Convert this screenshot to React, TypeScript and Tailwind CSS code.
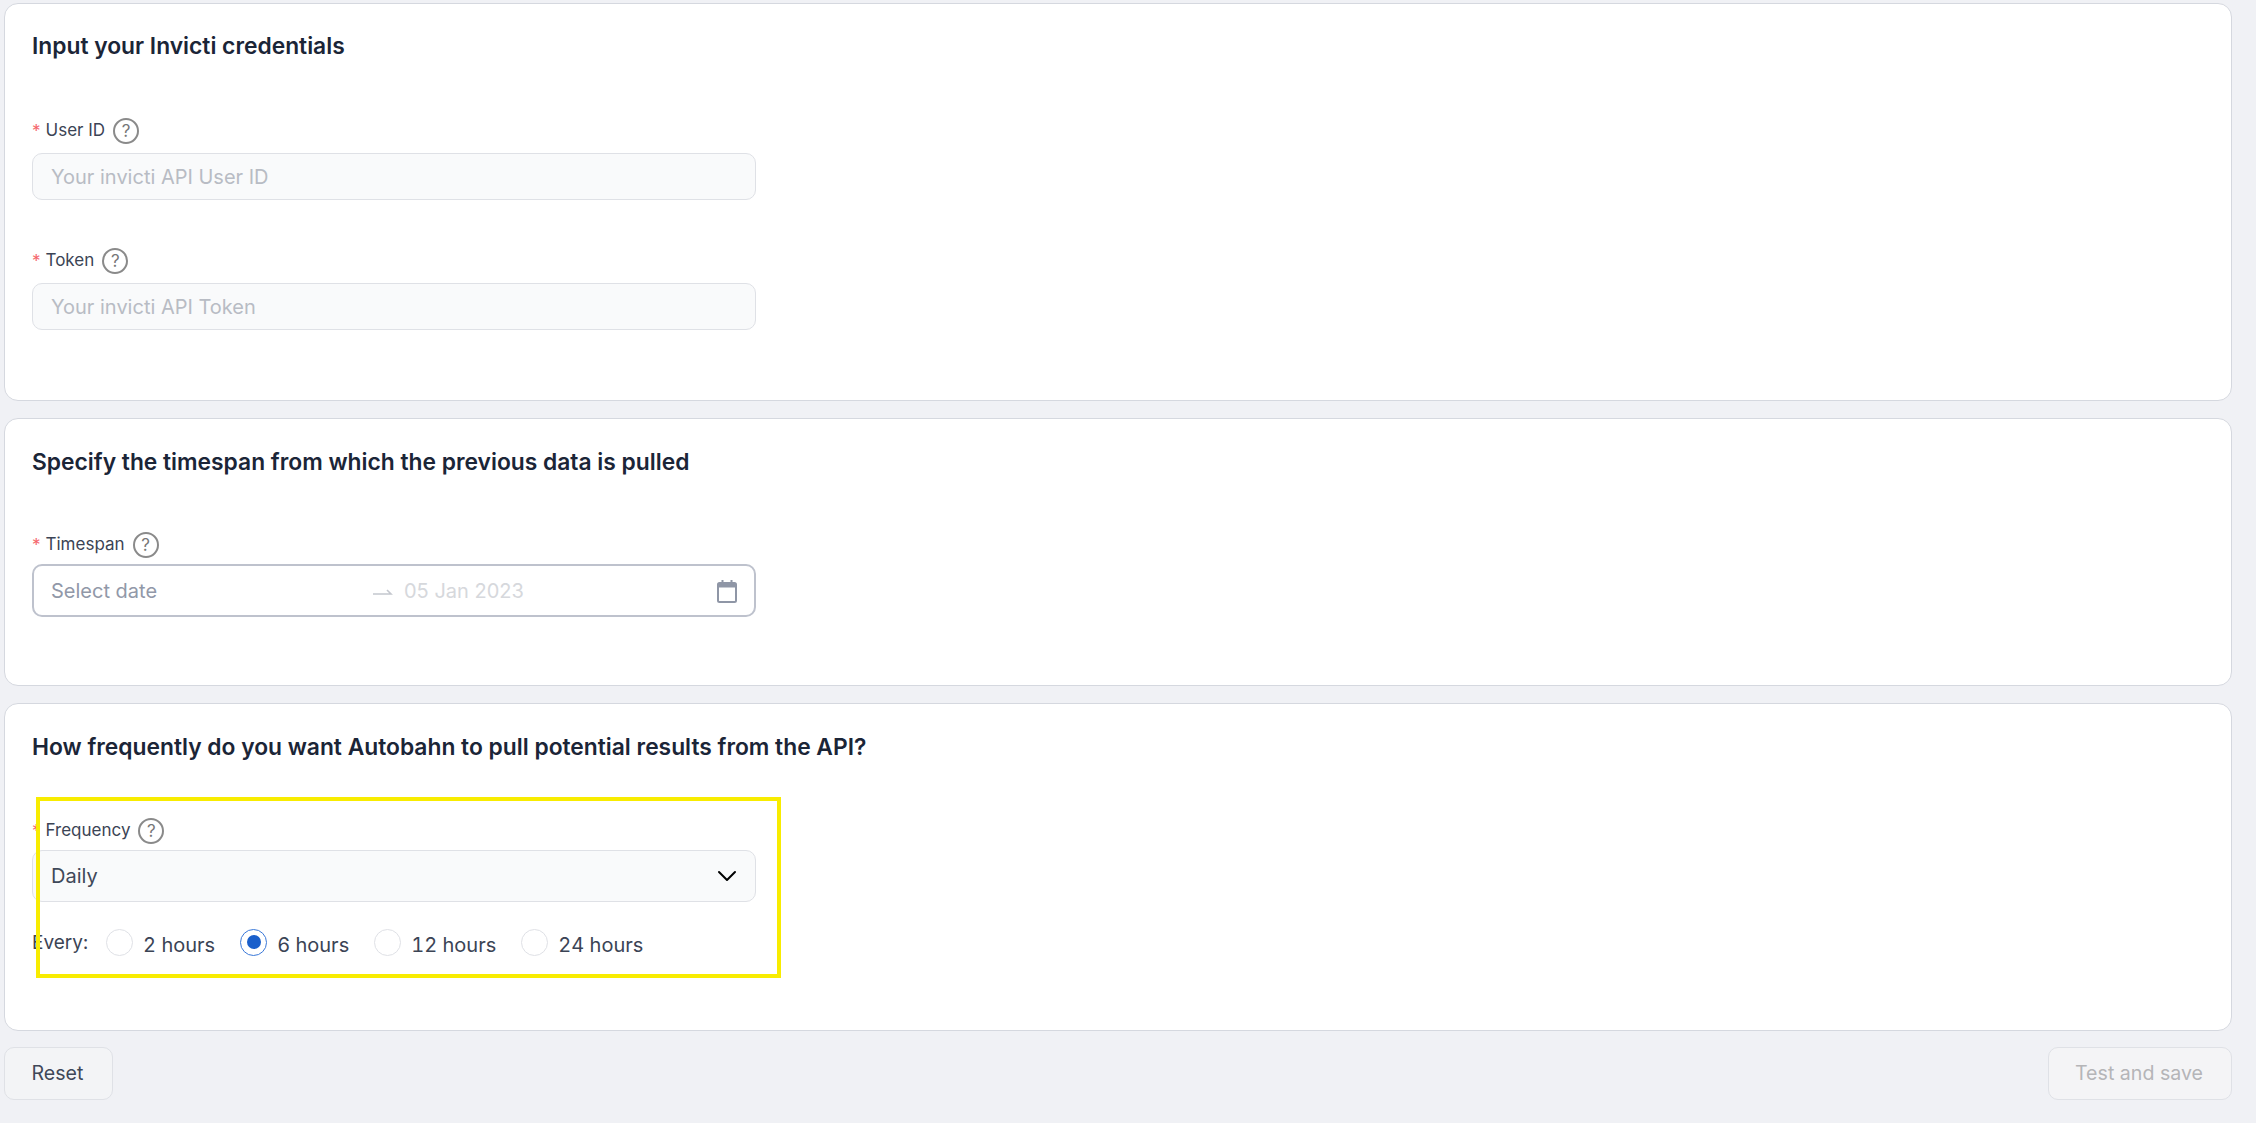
import { ChevronDown } from 'lucide-react';

const INTERVALS = [
  { label: '2 hours', checked: false },
  { label: '6 hours', checked: true },
  { label: '12 hours', checked: false },
  { label: '24 hours', checked: false },
];

function HelpIcon() {
  return (
    <span className="flex h-[26px] w-[26px] shrink-0 items-center justify-center rounded-full border-2 border-[#8a8a8a] text-[17px] leading-none text-[#777777]">
      ?
    </span>
  );
}

function FieldLabel({ text }: { text: string }) {
  return (
    <div className="flex h-[26px] translate-y-[1px] items-center">
      <span className="mr-[5px] text-[17px] leading-none text-[#f5666b]">*</span>
      <span className="mr-[8px] text-[17px] text-[#3b4455]">{text}</span>
      <HelpIcon />
    </div>
  );
}

function TextField({ placeholder }: { placeholder: string }) {
  return (
    <div className="mt-[10px] flex h-[47px] w-[724px] items-center rounded-[10px] border border-[#dfe1e6] bg-[#f9fafb] px-[18px] text-[20px] text-[#b8bcc4]">
      {placeholder}
    </div>
  );
}

function Card({ title, className, children }: { title: string; className: string; children: React.ReactNode }) {
  return (
    <section className={`rounded-[14px] border border-[#d5d8df] bg-white px-[27px] ${className}`}>
      <h2 className="text-[22.8px] leading-[32px] font-semibold text-[#1b2537]">{title}</h2>
      {children}
    </section>
  );
}

export default function App() {
  return (
    <div className="relative h-[1123px] w-[2256px] overflow-hidden bg-[#f0f1f5] pl-[4px] pr-[24px] pt-[3px] font-['Inter',sans-serif]">
      <div className="flex flex-col gap-[17px]">
        <Card title="Input your Invicti credentials" className="h-[398px] pt-[26px]">
          <div className="mt-[55px]">
            <FieldLabel text="User ID" />
            <TextField placeholder="Your invicti API User ID" />
          </div>
          <div className="mt-[47px]">
            <FieldLabel text="Token" />
            <TextField placeholder="Your invicti API Token" />
          </div>
        </Card>

        <Card title="Specify the timespan from which the previous data is pulled" className="h-[268px] pt-[27px]">
          <div className="mt-[53px]">
            <FieldLabel text="Timespan" />
            <div className="mt-[7px] flex h-[53px] w-[724px] items-center rounded-[10px] border-2 border-[#bec2cd] bg-white pl-[17px] pr-[16px] text-[20px]">
              <span className="w-[322px] text-[#9198a8]">Select date</span>
              <svg width="20" height="10" viewBox="0 0 20 10" className="mr-[11px]" fill="none" stroke="#c4c7ce" strokeWidth="1.6">
                <path d="M0 8h18l-4-4" />
              </svg>
              <span className="text-[#d6d8dc]">05 Jan 2023</span>
              <svg width="22" height="24" viewBox="0 0 22 24" className="ml-auto" fill="none" stroke="#8f96a6" strokeWidth="2">
                <rect x="2" y="4" width="18" height="19" rx="1.5" />
                <path d="M2 6.5h18" strokeWidth="4" />
                <path d="M6.5 1v3M15.5 1v3" />
              </svg>
            </div>
          </div>
        </Card>

        <Card title="How frequently do you want Autobahn to pull potential results from the API?" className="h-[328px] pt-[27px]">
          <div className="mt-[54px]">
            <FieldLabel text="Frequency" />
            <div className="mt-[7px] flex h-[52px] w-[724px] items-center justify-between rounded-[10px] border border-[#dfe1e6] bg-[#f9fafb] pl-[18px] pr-[12px] text-[20px] text-[#3f4859]">
              Daily
              <ChevronDown size={32} strokeWidth={1.5} className="text-black" />
            </div>
            <div className="mt-[22px] flex items-center text-[20px] tabular-nums text-[#3b4455]">
              <span className="mr-[18px] mt-[2px] text-[19px]">Every:</span>
              {INTERVALS.map((item) => (
                <div key={item.label} className="mr-[25px] flex items-center">
                  {item.checked ? (
                    <span className="flex h-[27px] w-[27px] items-center justify-center rounded-full border border-[#3a78d8]">
                      <span className="h-[14px] w-[14px] rounded-full bg-[#1a5fcb]" />
                    </span>
                  ) : (
                    <span className="h-[27px] w-[27px] rounded-full border border-[#dfe1e6] bg-white" />
                  )}
                  <span className="ml-[10px] mt-[6px]">{item.label}</span>
                </div>
              ))}
            </div>
          </div>
        </Card>
      </div>

      <div className="mt-[16px] flex justify-between">
        <button className="h-[53px] w-[109px] rounded-[10px] border border-[#dfe1e6] bg-[#f3f4f6] pr-[2px] text-[19.6px] text-[#3f4859]">
          Reset
        </button>
        <button className="h-[53px] w-[184px] rounded-[10px] border border-[#dfe1e6] bg-[#f4f4f6] pr-[2px] text-[19.6px] text-[#b5b5b8]">
          Test and save
        </button>
      </div>

      {/* Yellow annotation drawn over the form */}
      <div className="absolute left-[36px] top-[797px] h-[181px] w-[745px] border-[4px] border-[#f8ec00]" />
    </div>
  );
}
